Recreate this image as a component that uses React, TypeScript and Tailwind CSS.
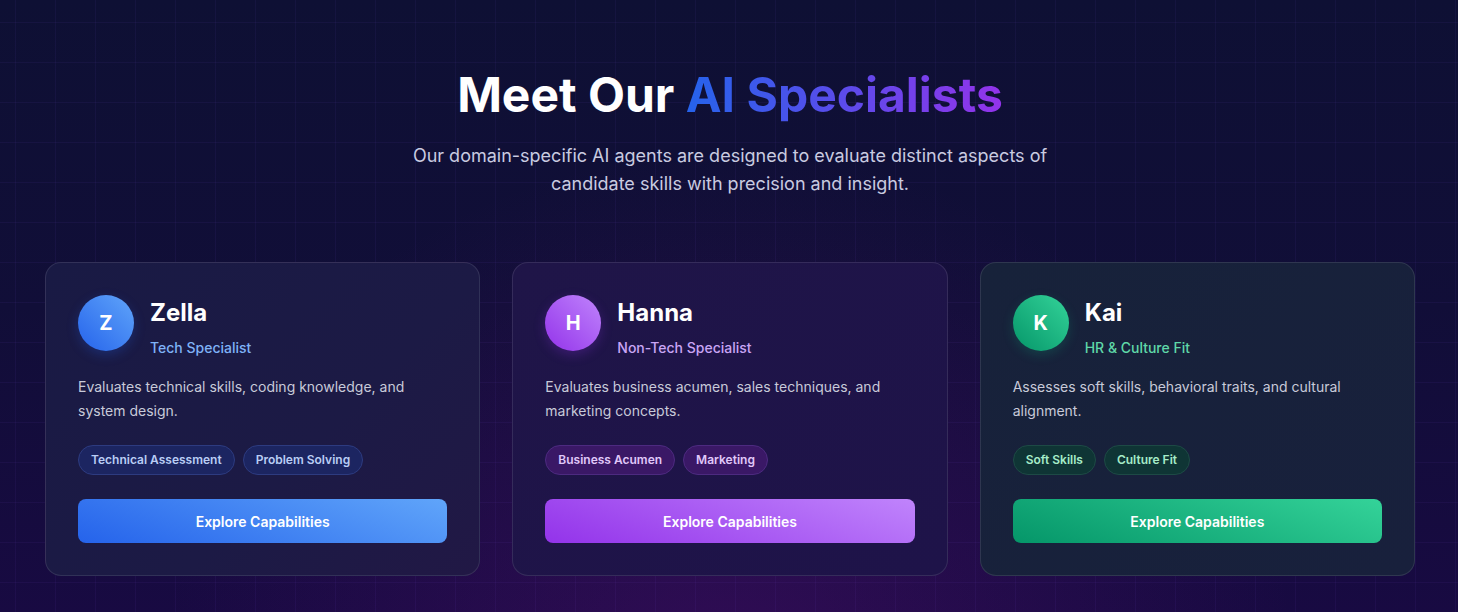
const agents = [
  {
    initial: 'Z',
    name: 'Zella',
    role: 'Tech Specialist',
    text: 'Evaluates technical skills, coding knowledge, and system design.',
    tags: ['Technical Assessment', 'Problem Solving'],
    card: 'bg-[linear-gradient(135deg,#191a44_0%,#1c1a45_60%,#211845_100%)]',
    avatar: 'bg-[linear-gradient(45deg,#2563eb,#60a5fa)] shadow-[0_4px_12px_rgba(37,99,235,0.25)]',
    roleColor: 'text-[#7fb2f7]',
    tag: 'bg-[#1c2561] border-[#2d3b80] text-[#b9cdf5]',
    button: 'bg-[linear-gradient(20deg,#2563eb_0%,#60a5fa_100%)]',
  },
  {
    initial: 'H',
    name: 'Hanna',
    role: 'Non-Tech Specialist',
    text: 'Evaluates business acumen, sales techniques, and marketing concepts.',
    tags: ['Business Acumen', 'Marketing'],
    card: 'bg-[linear-gradient(135deg,#1f1548_0%,#1e1349_100%)]',
    avatar: 'bg-[linear-gradient(45deg,#9333ea,#c084fc)] shadow-[0_4px_12px_rgba(147,51,234,0.25)]',
    roleColor: 'text-[#c9a5f5]',
    tag: 'bg-[#3a1866] border-[#4d2a80] text-[#e0c8fa]',
    button: 'bg-[linear-gradient(20deg,#9333ea_0%,#c084fc_100%)]',
  },
  {
    initial: 'K',
    name: 'Kai',
    role: 'HR & Culture Fit',
    text: 'Assesses soft skills, behavioral traits, and cultural alignment.',
    tags: ['Soft Skills', 'Culture Fit'],
    card: 'bg-[linear-gradient(135deg,#17223a_0%,#18203c_100%)]',
    avatar: 'bg-[linear-gradient(45deg,#059669,#34d399)] shadow-[0_4px_12px_rgba(16,185,129,0.2)]',
    roleColor: 'text-[#5fd8a8]',
    tag: 'bg-[#0f3535] border-[#1d4a45] text-[#a6ecc8]',
    button: 'bg-[linear-gradient(20deg,#059669_0%,#34d399_100%)]',
  },
];

export default function App() {
  return (
    <div
      className="min-h-[612px] w-full bg-[linear-gradient(180deg,#0e1034_0%,#110e38_50%,#180a42_100%)] font-['Inter','Noto_Sans',sans-serif] text-white"
    >
      <div className="min-h-[612px] bg-[radial-gradient(ellipse_at_50%_110%,rgba(120,20,140,0.25),transparent_55%)]">
        <div className="min-h-[612px] bg-[linear-gradient(rgba(139,92,246,0.06)_1px,transparent_1px),linear-gradient(90deg,rgba(139,92,246,0.06)_1px,transparent_1px)] bg-[size:40px_40px] bg-[position:15px_22px] pl-[45px] pr-[43px] pt-[70px] pb-[36px]">
          <h1 className="text-center text-[48px] font-bold leading-[50px]">
            Meet Our{' '}
            <span className="bg-[linear-gradient(90deg,#2563eb,#9333ea)] bg-clip-text text-transparent">
              AI Specialists
            </span>
          </h1>
          <p className="mx-auto mt-[22px] max-w-[672px] text-center text-[18px] leading-[28px] text-[#c9cbe0]">
            Our domain-specific AI agents are designed to evaluate distinct aspects of candidate skills with
            precision and insight.
          </p>

          <div className="mt-[64px] grid grid-cols-3 gap-[32px]">
            {agents.map((a) => (
              <div
                key={a.name}
                className={`rounded-2xl border border-white/10 p-[32px] ${a.card}`}
              >
                <div className="flex items-start gap-4">
                  <div
                    className={`flex h-14 w-14 shrink-0 items-center justify-center rounded-full text-[20px] font-bold ${a.avatar}`}
                  >
                    {a.initial}
                  </div>
                  <div className="pt-[2px]">
                    <div className="text-[24px] font-bold leading-[32px]">{a.name}</div>
                    <div className={`mt-[9px] text-[14px] font-medium leading-[20px] ${a.roleColor}`}>{a.role}</div>
                  </div>
                </div>
                <p className="mt-[17px] pr-6 text-[14px] leading-[24px] text-[#c8cad9]">{a.text}</p>
                <div className="mt-[22px] flex gap-2">
                  {a.tags.map((t) => (
                    <span
                      key={t}
                      className={`rounded-full border px-3 py-[6px] text-[12px] font-semibold leading-[16px] ${a.tag}`}
                    >
                      {t}
                    </span>
                  ))}
                </div>
                <button
                  type="button"
                  className={`mt-[24px] h-[44px] w-full rounded-lg text-[14px] font-semibold text-white ${a.button}`}
                >
                  Explore Capabilities
                </button>
              </div>
            ))}
          </div>
        </div>
      </div>
    </div>
  );
}
